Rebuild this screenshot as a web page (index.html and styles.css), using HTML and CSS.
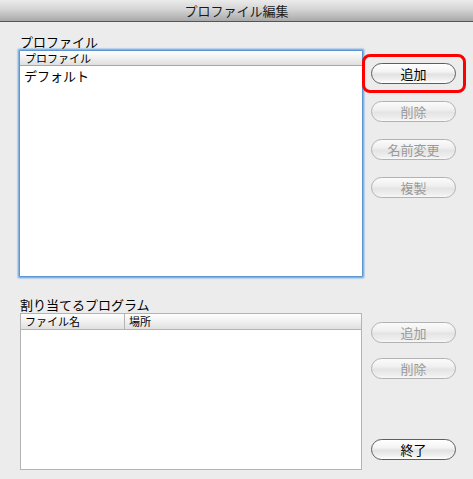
FILE: index.html
```html
<!DOCTYPE html>
<html lang="ja">
<head>
<meta charset="utf-8">
<title>プロファイル編集</title>
<link rel="stylesheet" href="styles.css">
</head>
<body>
<div class="window">
  <div class="titlebar">プロファイル編集</div>
  <div class="section top">
    <div class="left">
      <div class="label">プロファイル</div>
      <div class="listbox">
        <div class="list-header"><span class="col">プロファイル</span></div>
        <div class="list-item">デフォルト</div>
      </div>
    </div>
    <div class="buttons top-buttons">
      <div class="highlight"><button class="btn">追加</button></div>
      <button class="btn disabled">削除</button>
      <button class="btn disabled">名前変更</button>
      <button class="btn disabled">複製</button>
    </div>
  </div>
  <div class="section bottom">
    <div class="left">
      <div class="label label2">割り当てるプログラム</div>
      <div class="table">
        <div class="table-header">
          <span class="th th-name">ファイル名</span>
          <span class="th th-place">場所</span>
        </div>
      </div>
    </div>
    <div class="buttons bottom-buttons">
      <button class="btn disabled">追加</button>
      <button class="btn disabled">削除</button>
      <button class="btn quit">終了</button>
    </div>
  </div>
</div>
</body>
</html>
```

FILE: styles.css
```css
* { box-sizing: border-box; }
html, body { margin: 0; padding: 0; }
body {
  background: #ececec;
  font-family: "Noto Sans CJK JP", "Noto Sans", sans-serif;
  color: #000;
}
.window {
  width: 473px;
  height: 479px;
  background: #ececec;
  overflow: hidden;
}
.titlebar {
  height: 22px;
  border-bottom: 1px solid #555;
  background: linear-gradient(#ebebeb, #d4d4d4 45%, #a9a9a9);
  text-align: center;
  font-size: 13px;
  line-height: 21px;
  color: #1a1a1a;
}
.section {
  display: flex;
  gap: 8px;
}
.section.top { margin-top: 13px; }
.section.bottom { margin-top: 20px; }
.left {
  margin-left: 19px;
  width: 344px;
}
.label {
  font-size: 13px;
  line-height: 13px;
  height: 15px;
  padding-left: 1px;
  white-space: nowrap;
}
.label2 {
  line-height: 16px;
  height: 16px;
}
.listbox {
  height: 227px;
  background: #fff;
  border: 1px solid #5d95d0;
  box-shadow: 0 0 0 1px #8ab4e0, 0 0 1px 2px #b6d0ec;
  border-radius: 1px;
}
.list-header {
  height: 15px;
  border-bottom: 1px solid #a8a8a8;
  background: linear-gradient(#ffffff, #f0f0f0 50%, #dedede);
  font-size: 11px;
  line-height: 13px;
  padding-top: 1px;
  padding-left: 5px;
}
.list-item {
  font-size: 13px;
  line-height: 18px;
  padding-left: 4px;
  padding-top: 1px;
}
.table {
  margin-left: 1px;
  width: 342px;
  height: 157px;
  background: #fff;
  border: 1px solid #b4b4b4;
}
.table-header {
  display: flex;
  height: 16px;
  border-bottom: 1px solid #b4b4b4;
  background: linear-gradient(#ffffff, #f0f0f0 50%, #e0e0e0);
  font-size: 11px;
  line-height: 15px;
}
.th { padding-left: 4px; }
.th-name {
  width: 104px;
  border-right: 1px solid #b4b4b4;
}
.buttons {
  display: flex;
  flex-direction: column;
  width: 85px;
}
.top-buttons {
  padding-top: 28px;
  gap: 17px;
}
.bottom-buttons {
  padding-top: 25px;
  gap: 15px;
}
.btn {
  display: block;
  width: 85px;
  height: 21px;
  margin: 0;
  padding: 0;
  border: 1px solid #5e5e5e;
  border-radius: 11px;
  background: linear-gradient(#ffffff, #f4f4f4 40%, #e2e2e2 55%, #f2f2f2 85%, #ffffff);
  font-family: "Noto Sans CJK JP", "Noto Sans", sans-serif;
  font-size: 13px;
  line-height: 18px;
  color: #000;
  text-align: center;
}
.btn.disabled {
  border-color: #b2b2b2;
  color: #9a9a9a;
  background: linear-gradient(#fbfbfb, #f0f0f0 40%, #e4e4e4 55%, #eeeeee 85%, #f8f8f8);
}
.btn.quit { margin-top: 45px; }
.highlight {
  position: relative;
}
.highlight::after {
  content: "";
  position: absolute;
  left: -9px;
  right: -10px;
  top: -9px;
  bottom: -9px;
  border: 3px solid #f00;
  border-radius: 8px;
  pointer-events: none;
}
```
